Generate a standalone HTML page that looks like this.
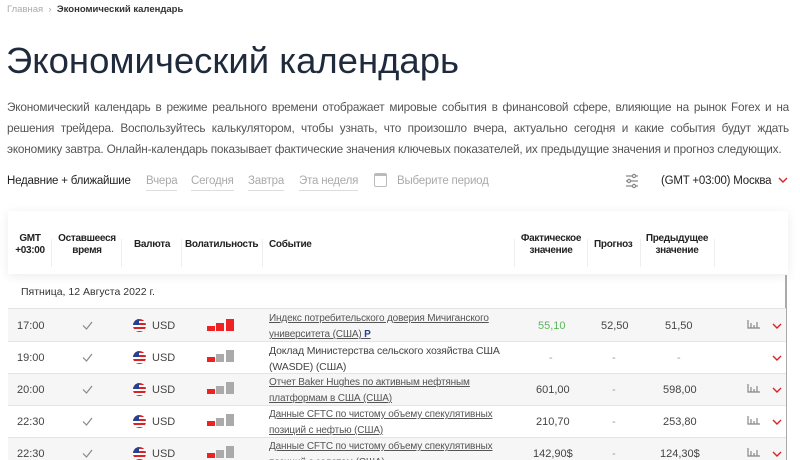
<!DOCTYPE html>
<html><head><meta charset="utf-8"><style>
*{margin:0;padding:0;box-sizing:border-box}
html,body{width:800px;height:460px;overflow:hidden}
body{background:#fff;font-family:"Liberation Sans",sans-serif;color:#333;position:relative}
.a{position:absolute;white-space:nowrap}
.bc{top:4px;font-size:9.5px;left:7px;color:#aaa}
.bc b{color:#333;font-weight:bold}
h1{position:absolute;left:6px;top:40px;font-size:36.5px;font-weight:normal;color:#1f2a3c;letter-spacing:0px}
p.d{position:absolute;left:7px;top:97px;width:782px;font-size:11.8px;letter-spacing:-0.2px;line-height:21px;color:#555;text-align:justify}
.f{top:175px;font-size:11.5px;letter-spacing:-0.2px;color:#aaa}
.f span{border-bottom:1px solid #ddd;padding-bottom:3px}
.card{position:absolute;left:8px;top:211px;width:780px;height:63px;background:#fff;box-shadow:0 2px 10px rgba(0,0,0,.08)}
.h{font-size:10px;font-weight:bold;color:#222;text-align:center;line-height:12px;letter-spacing:-0.3px}
.sep{position:absolute;top:28px;width:1px;height:28px;background:#eee}
.row{position:absolute;left:8px;width:778px;border-top:1px solid #e4e4e4;font-size:11px;color:#444}
.row div{position:absolute}
.ev{left:261px;font-size:10px;letter-spacing:-0.15px;line-height:16px;color:#444}
.ev.u{text-decoration:underline;color:#555}
.flag{width:13px;height:13px;border-radius:50%;background:repeating-linear-gradient(#d22 0 2px,#fff 2px 4px);overflow:hidden}
.flag:before{content:"";position:absolute;left:0;top:0;width:6px;height:6px;background:#2a3f8f}
.bars i{position:absolute;bottom:0;width:8px;background:#aaa}
</style></head><body>
<div class="a bc">Главная &nbsp;›&nbsp; <b>Экономический календарь</b></div>
<h1>Экономический календарь</h1>
<p class="d">Экономический календарь в режиме реального времени отображает мировые события в финансовой сфере, влияющие на рынок Forex и на решения трейдера. Воспользуйтесь калькулятором, чтобы узнать, что произошло вчера, актуально сегодня и какие события будут ждать экономику завтра. Онлайн-календарь показывает фактические значения ключевых показателей, их предыдущие значения и прогноз следующих.</p>
<div class="a f" style="left:7px;color:#222">Недавние + ближайшие</div>
<div class="a f" style="left:146px"><span>Вчера</span></div>
<div class="a f" style="left:191px"><span>Сегодня</span></div>
<div class="a f" style="left:248px"><span>Завтра</span></div>
<div class="a f" style="left:299px"><span>Эта неделя</span></div>
<div class="a" style="left:374px;top:173px;width:13px;height:14px;border:1.5px solid #bbb;border-top-width:3px;border-radius:2px"></div>
<div class="a f" style="left:397px">Выберите период</div>
<svg class="a" style="left:624px;top:173px" width="16" height="16" viewBox="0 0 16 16" fill="none" stroke="#888" stroke-width="1.2"><path d="M2 3h12M2 8h12M2 13h12"/><circle cx="10" cy="3" r="1.6" fill="#fff"/><circle cx="5" cy="8" r="1.6" fill="#fff"/><circle cx="10" cy="13" r="1.6" fill="#fff"/></svg>
<div class="a f" style="left:661px;color:#222">(GMT +03:00) Москва</div>
<svg class="a" style="left:778px;top:177px" width="10" height="7" viewBox="0 0 10 7" fill="none" stroke="#e02020" stroke-width="1.4"><path d="M1 1l4 4 4-4"/></svg>

<div class="card">
<div class="a h" style="left:6px;top:22px;width:32px">GMT<br>+03:00</div>
<div class="sep" style="left:43px"></div>
<div class="a h" style="left:48px;top:22px;width:62px">Оставшееся<br>время</div>
<div class="sep" style="left:113px"></div>
<div class="a h" style="left:126px;top:28px">Валюта</div>
<div class="sep" style="left:173px"></div>
<div class="a h" style="left:177px;top:28px">Волатильность</div>
<div class="sep" style="left:254px"></div>
<div class="a h" style="left:261px;top:28px">Событие</div>
<div class="sep" style="left:506px"></div>
<div class="a h" style="left:508px;top:22px;width:70px">Фактическое<br>значение</div>
<div class="sep" style="left:579px"></div>
<div class="a h" style="left:586px;top:28px">Прогноз</div>
<div class="sep" style="left:632px"></div>
<div class="a h" style="left:634px;top:22px;width:70px">Предыдущее<br>значение</div>
<div class="sep" style="left:706px"></div>
</div>
<div class="a" style="left:785px;top:275px;width:2px;height:185px;background:#aaa"></div>
<div class="a" style="left:21px;top:286px;font-size:10.5px;color:#333">Пятница, 12 Августа 2022 г.</div>

<div class="row" style="top:308px;height:33px;background:#f6f6f6">
<div style="left:9px;top:11px">17:00</div><svg style="position:absolute;left:74px;top:12px" width="11" height="9" viewBox="0 0 11 9" fill="none" stroke="#888" stroke-width="1.2"><path d="M1 4.5l3.5 3.5L10 1"/></svg>
<div class="flag" style="left:125px;top:10px"></div><div style="left:144px;top:11px">USD</div>
<div class="bars" style="left:199px;top:10px;width:30px;height:12px"><i style="left:0;height:5px;background:#e22"></i><i style="left:9px;height:8px;background:#e22"></i><i style="left:19px;height:12px;background:#e22"></i></div>
<div class="ev u" style="top:2px">Индекс потребительского доверия Мичиганского<br>университета (США)<b style="color:#2a3f8f;text-decoration:none"> P</b></div>
<div style="left:530px;top:11px;color:#5cb85c">55,10</div><div style="left:593px;top:11px">52,50</div><div style="left:657px;top:11px">51,50</div>
<svg style="position:absolute;left:739px;top:11px" width="13" height="9" viewBox="0 0 13 9" fill="none" stroke="#888" stroke-width="1.2"><path d="M1 0v8h12M4 3v5M7 5v3M10 2v6"/></svg><svg style="position:absolute;left:764px;top:14px" width="10" height="7" viewBox="0 0 10 7" fill="none" stroke="#e02020" stroke-width="1.4"><path d="M1 1l4 4 4-4"/></svg>
</div>
<div class="row" style="top:341px;height:32px;background:#fff">
<div style="left:9px;top:10px">19:00</div><svg style="position:absolute;left:74px;top:11px" width="11" height="9" viewBox="0 0 11 9" fill="none" stroke="#888" stroke-width="1.2"><path d="M1 4.5l3.5 3.5L10 1"/></svg>
<div class="flag" style="left:125px;top:9px"></div><div style="left:144px;top:10px">USD</div>
<div class="bars" style="left:199px;top:8px;width:30px;height:12px"><i style="left:0;height:5px;background:#e22"></i><i style="left:9px;height:8px"></i><i style="left:19px;height:12px"></i></div>
<div class="ev" style="top:1px;font-size:10.5px">Доклад Министерства сельского хозяйства США<br>(WASDE) (США)</div>
<div style="left:541px;top:10px;color:#999">-</div><div style="left:604px;top:10px;color:#999">-</div><div style="left:669px;top:10px;color:#999">-</div>
<svg style="position:absolute;left:764px;top:13px" width="10" height="7" viewBox="0 0 10 7" fill="none" stroke="#e02020" stroke-width="1.4"><path d="M1 1l4 4 4-4"/></svg>
</div>
<div class="row" style="top:373px;height:32px;background:#f6f6f6">
<div style="left:9px;top:10px">20:00</div><svg style="position:absolute;left:74px;top:11px" width="11" height="9" viewBox="0 0 11 9" fill="none" stroke="#888" stroke-width="1.2"><path d="M1 4.5l3.5 3.5L10 1"/></svg>
<div class="flag" style="left:125px;top:9px"></div><div style="left:144px;top:10px">USD</div>
<div class="bars" style="left:199px;top:8px;width:30px;height:12px"><i style="left:0;height:5px;background:#e22"></i><i style="left:9px;height:8px"></i><i style="left:19px;height:12px"></i></div>
<div class="ev u" style="top:1px">Отчет Baker Hughes по активным нефтяным<br>платформам в США (США)</div>
<div style="left:528px;top:10px">601,00</div><div style="left:604px;top:10px;color:#999">-</div><div style="left:655px;top:10px">598,00</div>
<svg style="position:absolute;left:739px;top:10px" width="13" height="9" viewBox="0 0 13 9" fill="none" stroke="#888" stroke-width="1.2"><path d="M1 0v8h12M4 3v5M7 5v3M10 2v6"/></svg><svg style="position:absolute;left:764px;top:13px" width="10" height="7" viewBox="0 0 10 7" fill="none" stroke="#e02020" stroke-width="1.4"><path d="M1 1l4 4 4-4"/></svg>
</div>
<div class="row" style="top:405px;height:32px;background:#fff">
<div style="left:9px;top:10px">22:30</div><svg style="position:absolute;left:74px;top:11px" width="11" height="9" viewBox="0 0 11 9" fill="none" stroke="#888" stroke-width="1.2"><path d="M1 4.5l3.5 3.5L10 1"/></svg>
<div class="flag" style="left:125px;top:9px"></div><div style="left:144px;top:10px">USD</div>
<div class="bars" style="left:199px;top:8px;width:30px;height:12px"><i style="left:0;height:5px;background:#e22"></i><i style="left:9px;height:8px"></i><i style="left:19px;height:12px"></i></div>
<div class="ev u" style="top:1px">Данные CFTC по чистому объему спекулятивных<br>позиций с нефтью (США)</div>
<div style="left:528px;top:10px">210,70</div><div style="left:604px;top:10px;color:#999">-</div><div style="left:655px;top:10px">253,80</div>
<svg style="position:absolute;left:739px;top:10px" width="13" height="9" viewBox="0 0 13 9" fill="none" stroke="#888" stroke-width="1.2"><path d="M1 0v8h12M4 3v5M7 5v3M10 2v6"/></svg><svg style="position:absolute;left:764px;top:13px" width="10" height="7" viewBox="0 0 10 7" fill="none" stroke="#e02020" stroke-width="1.4"><path d="M1 1l4 4 4-4"/></svg>
</div>
<div class="row" style="top:437px;height:32px;background:#f6f6f6">
<div style="left:9px;top:10px">22:30</div><svg style="position:absolute;left:74px;top:11px" width="11" height="9" viewBox="0 0 11 9" fill="none" stroke="#888" stroke-width="1.2"><path d="M1 4.5l3.5 3.5L10 1"/></svg>
<div class="flag" style="left:125px;top:9px"></div><div style="left:144px;top:10px">USD</div>
<div class="bars" style="left:199px;top:8px;width:30px;height:12px"><i style="left:0;height:5px;background:#e22"></i><i style="left:9px;height:8px"></i><i style="left:19px;height:12px"></i></div>
<div class="ev u" style="top:1px">Данные CFTC по чистому объему спекулятивных<br>позиций с золотом (США)</div>
<div style="left:525px;top:10px">142,90$</div><div style="left:604px;top:10px;color:#999">-</div><div style="left:652px;top:10px">124,30$</div>
<svg style="position:absolute;left:739px;top:10px" width="13" height="9" viewBox="0 0 13 9" fill="none" stroke="#888" stroke-width="1.2"><path d="M1 0v8h12M4 3v5M7 5v3M10 2v6"/></svg><svg style="position:absolute;left:764px;top:13px" width="10" height="7" viewBox="0 0 10 7" fill="none" stroke="#e02020" stroke-width="1.4"><path d="M1 1l4 4 4-4"/></svg>
</div>
</body></html>
